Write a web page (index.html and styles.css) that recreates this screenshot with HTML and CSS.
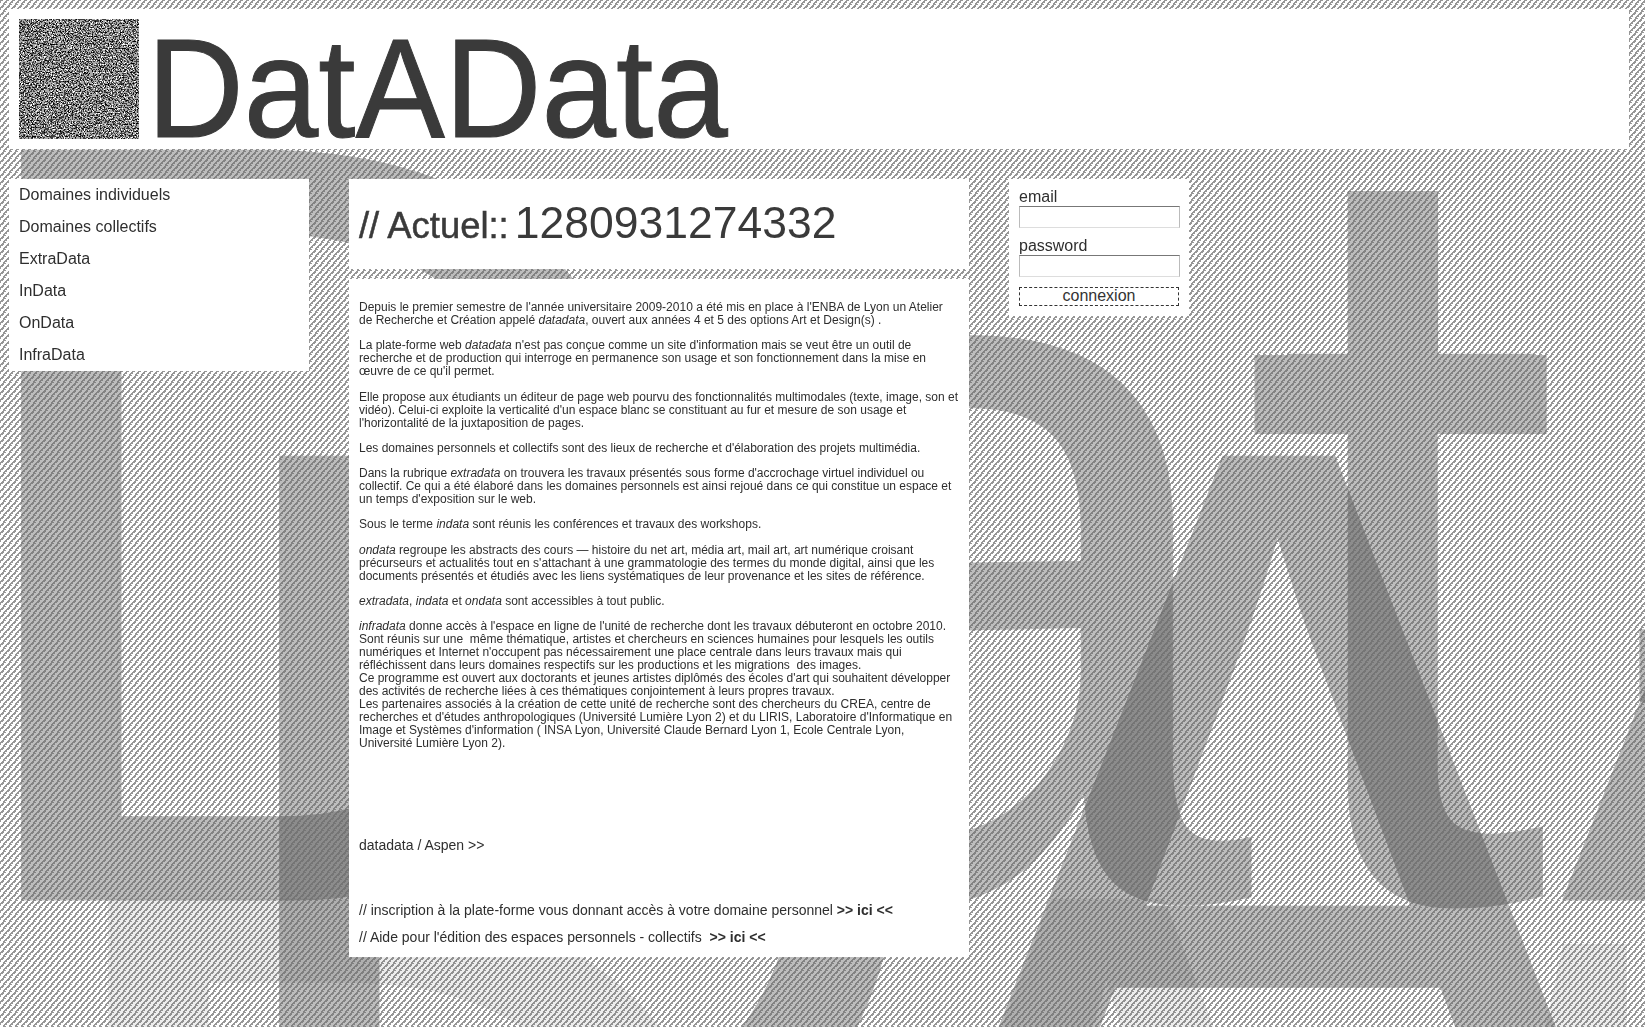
FILE: index.html
```html
<!DOCTYPE html>
<html lang="fr">
<head>
<meta charset="utf-8">
<title>DatAData</title>
<link rel="stylesheet" href="styles.css">
</head>
<body>
<div class="backdrop" aria-hidden="true">
  <div class="ghost ghost-one">D<span class="low low-a">a</span><span class="low low-t">t</span>A<span class="t-stem"></span><span class="crossbar"></span></div>
  <div class="ghost ghost-two"><span class="kern-d">D</span>AtA</div>
  <div class="ghost ghost-three"><span class="kern-d">D</span>AtA</div>
  <svg class="hatch" width="100%" height="100%">
    <defs>
      <pattern id="hatch-tile" width="6" height="7" patternUnits="userSpaceOnUse">
        <path shape-rendering="crispEdges" fill="#6b6b6b" fill-opacity="0.7" d="M0 0h3v1h-3zM5 1h1v1h-1zM0 1h1v1h-1zM4 2h2v1h-2zM0 2h1v1h-1zM3 3h2v1h-2zM3 4h3v1h-3zM2 5h2v1h-2zM1 6h3v1h-3z"/>
      </pattern>
    </defs>
    <rect width="100%" height="100%" fill="url(#hatch-tile)"/>
  </svg>
</div>

<div class="page">
  <header class="masthead">
    <svg class="logo" width="120" height="120" viewBox="0 0 120 120" aria-hidden="true">
      <filter id="static" x="0" y="0" width="100%" height="100%">
        <feTurbulence type="fractalNoise" baseFrequency="0.75" numOctaves="3" seed="7"/>
        <feColorMatrix type="matrix" values="1 0 0 0 0  1 0 0 0 0  1 0 0 0 0  0 0 0 0 1"/>
        <feComponentTransfer>
          <feFuncR type="discrete" tableValues="0 0 0.05 0.4 1 1"/>
          <feFuncG type="discrete" tableValues="0 0 0.05 0.4 1 1"/>
          <feFuncB type="discrete" tableValues="0 0 0.05 0.4 1 1"/>
        </feComponentTransfer>
      </filter>
      <rect width="120" height="120" filter="url(#static)"/>
    </svg>
    <h1 class="site-title">DatAData</h1>
  </header>

  <div class="columns">
    <nav class="menu">
      <a class="menu-item">Domaines individuels</a>
      <a class="menu-item">Domaines collectifs</a>
      <a class="menu-item">ExtraData</a>
      <a class="menu-item">InData</a>
      <a class="menu-item">OnData</a>
      <a class="menu-item">InfraData</a>
    </nav>

    <main class="center">
      <h2 class="heading"><span class="heading-label">// Actuel::</span><span class="heading-stamp">1280931274332</span></h2>
      <article class="content">
        <p>Depuis le premier semestre de l'année universitaire 2009-2010 a été mis en place à l'ENBA de Lyon un Atelier<br>de Recherche et Création appelé <em>datadata</em>, ouvert aux années 4 et 5 des options Art et Design(s) .</p>
        <p>La plate-forme web <em>datadata</em> n'est pas conçue comme un site d'information mais se veut être un outil de<br>recherche et de production qui interroge en permanence son usage et son fonctionnement dans la mise en<br>œuvre de ce qu'il permet.</p>
        <p>Elle propose aux étudiants un éditeur de page web pourvu des fonctionnalités multimodales (texte, image, son et<br>vidéo). Celui-ci exploite la verticalité d'un espace blanc se constituant au fur et mesure de son usage et<br>l'horizontalité de la juxtaposition de pages.</p>
        <p>Les domaines personnels et collectifs sont des lieux de recherche et d'élaboration des projets multimédia.</p>
        <p>Dans la rubrique <em>extradata</em> on trouvera les travaux présentés sous forme d'accrochage virtuel individuel ou<br>collectif. Ce qui a été élaboré dans les domaines personnels est ainsi rejoué dans ce qui constitue un espace et<br>un temps d'exposition sur le web.</p>
        <p>Sous le terme <em>indata</em> sont réunis les conférences et travaux des workshops.</p>
        <p><em>ondata</em> regroupe les abstracts des cours — histoire du net art, média art, mail art, art numérique croisant<br>précurseurs et actualités tout en s'attachant à une grammatologie des termes du monde digital, ainsi que les<br>documents présentés et étudiés avec les liens systématiques de leur provenance et les sites de référence.</p>
        <p><em>extradata</em>, <em>indata</em> et <em>ondata</em> sont accessibles à tout public.</p>
        <p><em>infradata</em> donne accès à l'espace en ligne de l'unité de recherche dont les travaux débuteront en octobre 2010.<br>Sont réunis sur une&nbsp; même thématique, artistes et chercheurs en sciences humaines pour lesquels les outils<br>numériques et Internet n'occupent pas nécessairement une place centrale dans leurs travaux mais qui<br>réfléchissent dans leurs domaines respectifs sur les productions et les migrations&nbsp; des images.<br>Ce programme est ouvert aux doctorants et jeunes artistes diplômés des écoles d'art qui souhaitent développer<br>des activités de recherche liées à ces thématiques conjointement à leurs propres travaux.<br>Les partenaires associés à la création de cette unité de recherche sont des chercheurs du CREA, centre de<br>recherches et d'études anthropologiques (Université Lumière Lyon 2) et du LIRIS, Laboratoire d'Informatique en<br>Image et Systèmes d'information ( INSA Lyon, Université Claude Bernard Lyon 1, Ecole Centrale Lyon,<br>Université Lumière Lyon 2).</p>
        <a class="link aspen">datadata / Aspen &gt;&gt;</a>
        <a class="link signup">// inscription à la plate-forme vous donnant accès à votre domaine personnel <strong>&gt;&gt; ici &lt;&lt;</strong></a>
        <a class="link help">// Aide pour l'édition des espaces personnels - collectifs&nbsp; <strong>&gt;&gt; ici &lt;&lt;</strong></a>
      </article>
    </main>

    <form class="login">
      <label class="field-label" for="email">email</label>
      <input class="field" id="email" type="text">
      <label class="field-label" for="password">password</label>
      <input class="field" id="password" type="password">
      <button class="submit" type="button">connexion</button>
    </form>
  </div>
</div>
</body>
</html>
```

FILE: styles.css
```css
html, body {
  margin: 0;
  padding: 0;
  height: 100%;
  overflow: hidden;
  background: #fff;
}

body {
  font-family: "Liberation Sans", Arial, sans-serif;
  color: #2e2e2e;
}

.backdrop {
  position: fixed;
  inset: 0;
  overflow: hidden;
}

.ghost {
  position: absolute;
  font-size: 1087px;
  line-height: 1;
  white-space: nowrap;
  color: #000;
  opacity: 0.26;
  transform: scaleX(0.961);
  transform-origin: 0 0;
  -webkit-text-stroke: 3px #000;
}

.ghost-one { left: -63px; top: -21px; }
.ghost-two { left: 195px; top: 285px; }
.ghost-three { left: 24px; top: 728px; opacity: 0.07; }

.low-a { font-size: 1045px; letter-spacing: 25px; }
.low-t { font-size: 1029px; letter-spacing: 14px; }
.kern-d { letter-spacing: -22px; }

.t-stem {
  position: absolute;
  left: 1468px;
  top: 212px;
  width: 94px;
  height: 170px;
  background: #000;
}

.crossbar {
  position: absolute;
  left: 1371px;
  top: 376px;
  width: 304px;
  height: 79px;
  background: #000;
}

.hatch {
  position: absolute;
  inset: 0;
  display: block;
}

.page {
  position: relative;
  padding: 9px;
}

.masthead {
  display: flex;
  align-items: flex-start;
  width: 1600px;
  height: 120px;
  padding: 10px;
  background: #fff;
}

.logo {
  display: block;
  flex: none;
}

.site-title {
  margin: 9px 0 0 8px;
  font-size: 141px;
  font-weight: normal;
  line-height: 120px;
  color: #3a3a3a;
  transform: scaleX(0.95);
  transform-origin: 0 0;
  -webkit-text-stroke: 1px #3a3a3a;
}

.columns {
  display: flex;
  align-items: flex-start;
  gap: 40px;
  margin-top: 30px;
}

.menu {
  display: flex;
  flex-direction: column;
  width: 300px;
  flex: none;
  background: #fff;
}

.menu-item {
  padding-left: 10px;
  font-size: 16px;
  line-height: 32px;
}

.center {
  display: flex;
  flex-direction: column;
  gap: 10px;
  width: 620px;
  flex: none;
}

.heading {
  display: flex;
  align-items: baseline;
  height: 90px;
  margin: 0;
  padding: 0 10px;
  box-sizing: border-box;
  background: #fff;
  font-weight: normal;
  line-height: 87px;
  color: #3a3a3a;
}

.heading-label {
  font-size: 36.4px;
  -webkit-text-stroke: 0.5px #3a3a3a;
}

.heading-stamp {
  font-size: 44.5px;
  margin-left: 6px;
}

.content {
  display: flex;
  flex-direction: column;
  box-sizing: border-box;
  height: 678px;
  padding: 22px 10px 0;
  background: #fff;
  font-size: 12px;
}

.content p {
  margin: 0 0 12.25px;
  line-height: 13px;
  white-space: nowrap;
}

.link {
  font-size: 14px;
  line-height: 16px;
}

.aspen { margin-top: 75px; }
.signup { margin-top: 49px; }
.help { margin-top: 11px; }

.login {
  display: flex;
  flex-direction: column;
  width: 160px;
  flex: none;
  padding: 9px 10px 10px;
  background: #fff;
}

.field-label {
  font-size: 16px;
  line-height: 18px;
}

.field {
  box-sizing: border-box;
  width: 161px;
  height: 22px;
  margin: 0 0 9px;
  padding: 0;
  background: #fff;
  border: 1px solid #bbb;
  border-top-color: #777;
  border-bottom-color: #ddd;
}

.submit {
  box-sizing: border-box;
  width: 160px;
  height: 19px;
  margin-top: 1px;
  padding: 0 0 2px;
  background: #fff;
  border: 1px dashed #333;
  font: 16px/16px "Liberation Sans", Arial, sans-serif;
  color: #333;
}
```
